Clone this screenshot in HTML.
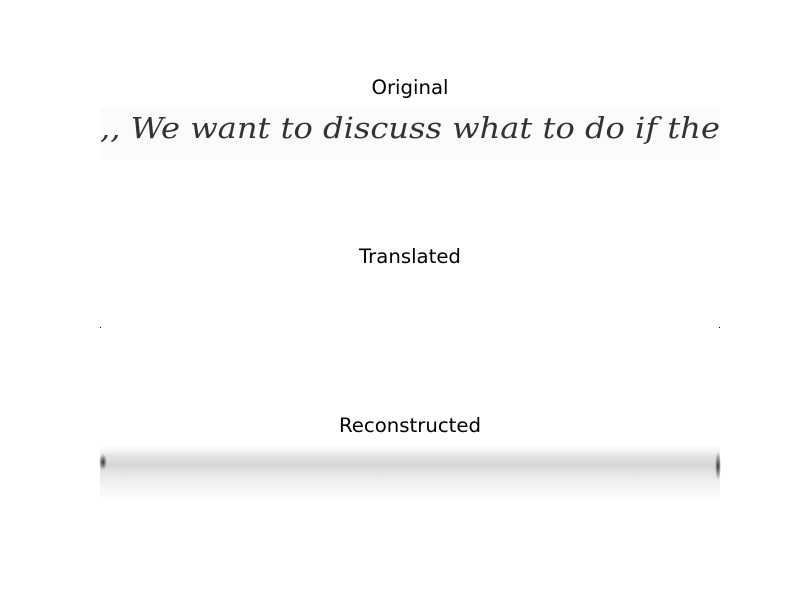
<!DOCTYPE html>
<html><head><style>
body{margin:0;background:#fff;width:800px;height:600px;overflow:hidden;position:relative;font-family:"DejaVu Sans","Liberation Sans",sans-serif}
.t{position:absolute;left:0;width:820px;text-align:center;font-size:19.7px;color:#000}
</style></head><body>
<div class="t" style="top:76px">Original</div>
<div class="t" style="top:245px">Translated</div>
<div class="t" style="top:414px">Reconstructed</div>
<svg width="800" height="600" style="position:absolute;left:0;top:0">
<defs>
<linearGradient id="g" x1="0" y1="0" x2="0" y2="1">
<stop offset="0" stop-color="#fff"/>
<stop offset="0.12" stop-color="#f4f4f4"/>
<stop offset="0.22" stop-color="#e2e2e2"/>
<stop offset="0.4" stop-color="#d6d6d6"/>
<stop offset="0.55" stop-color="#e6e6e6"/>
<stop offset="0.75" stop-color="#f3f3f3"/>
<stop offset="1" stop-color="#fafafa"/>
</linearGradient>
<radialGradient id="b"><stop offset="0" stop-color="#333"/><stop offset="1" stop-color="#333" stop-opacity="0"/></radialGradient>
</defs>
<rect x="100" y="107" width="620" height="53" fill="#fbfbfb"/>
<text x="100" y="138" font-family="DejaVu Serif" font-style="italic" font-size="29" fill="#333" textLength="620" lengthAdjust="spacingAndGlyphs">,, We want to discuss what to do if the</text>
<rect x="100" y="327" width="1" height="1" fill="#000"/>
<rect x="719" y="327" width="1" height="1" fill="#000"/>
<rect x="100" y="445" width="620" height="52" fill="url(#g)"/>
<ellipse cx="103" cy="462" rx="4" ry="8" fill="url(#b)"/>
<ellipse cx="718" cy="466" rx="3" ry="14" fill="url(#b)"/>
</svg>
</body></html>
